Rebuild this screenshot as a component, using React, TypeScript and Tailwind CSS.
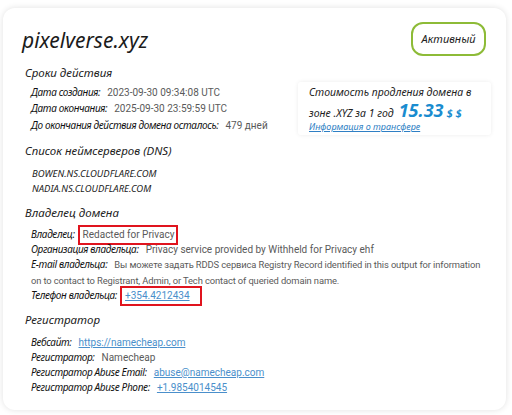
import React from "react";

const italic = { fontFamily: '"Noto Sans", "Open Sans", sans-serif' };
const plain = { fontFamily: "Roboto, sans-serif" };

function Label({ children }: { children: React.ReactNode }) {
  return (
    <span className="italic text-[10px] tracking-[-0.35px] text-[#111]" style={italic}>
      {children}
    </span>
  );
}

function Row({ label, children }: { label: string; children: React.ReactNode }) {
  return (
    <div className="flex items-center h-[15.2px] whitespace-nowrap">
      <Label>{label}</Label>
      <span className="ml-[7px] text-[10px] text-[#5a5a5a]" style={plain}>
        {children}
      </span>
    </div>
  );
}

function Heading({ children, className = "" }: { children: React.ReactNode; className?: string }) {
  return (
    <h2 className={"italic text-[11.5px] leading-[16px] text-[#222] " + className} style={italic}>
      {children}
    </h2>
  );
}

function Link({ children }: { children: React.ReactNode }) {
  return <a className="text-[#4a8fcb] underline underline-offset-1">{children}</a>;
}

export default function App() {
  return (
    <div className="w-[512px] h-[415px] bg-white pt-[8px] px-[3px]">
      <div className="w-[503px] h-[402px] rounded-[12px] bg-white shadow-[0_0_6px_rgba(0,0,0,0.12)] pt-[14px] pl-[19px] pr-[20px]">
        <div className="flex items-center justify-between h-[34px]">
          <h1 className="italic text-[21px] text-[#1b1b1b] leading-[28px] mt-[2px]" style={italic}>
            pixelverse.xyz
          </h1>
          <div
            className="w-[75px] h-[34px] rounded-[12px] border-2 border-[#8dbb37] flex items-center justify-center italic text-[11px] text-[#222]"
            style={italic}
          >
            Активный
          </div>
        </div>

        <div className="flex justify-between items-start">
          <div className="pl-[3px]">
            <Heading className="mt-[9px]">Сроки действия</Heading>
            <div className="mt-[3px] pl-[6px]">
              <div className="h-[16.5px] flex items-center"><Row label="Дата создания:">2023-09-30 09:34:08 UTC</Row></div>
              <div className="h-[16.5px] flex items-center"><Row label="Дата окончания:">2025-09-30 23:59:59 UTC</Row></div>
              <div className="h-[16.5px] flex items-center"><Row label="До окончания действия домена осталось:">479 дней</Row></div>
            </div>
          </div>
          <div className="mt-[26px] w-[193px] h-[53px] shadow-[0_0_4px_rgba(0,0,0,0.08)] rounded-[3px] pl-[11px] pt-[2px] mr-[-5px]">
            <div className="italic text-[10.5px] leading-[16px] text-[#222] whitespace-nowrap" style={italic}>
              Стоимость продления домена в
            </div>
            <div className="flex items-baseline italic text-[10.5px] leading-[20px] h-[20px] text-[#222] whitespace-nowrap" style={italic}>
              зоне .XYZ за 1 год
              <span className="ml-[5px] font-bold text-[18px] text-[#1a8ccf]" style={italic}>
                15.33
              </span>
              <span className="ml-[3px] font-bold italic text-[11px] text-[#1a8ccf]">$ $</span>
            </div>
            <div className="italic text-[9px] leading-[14px] text-[#2f7fc4] underline" style={italic}>
              Информация о трансфере
            </div>
          </div>
        </div>

        <div className="pl-[3px]">
          <Heading className="mt-[8px]">Список неймсерверов (DNS)</Heading>
          <div className="mt-[6.5px] pl-[7px] italic text-[9.5px] leading-[15px] text-[#222]" style={italic}>
            <div>BOWEN.NS.CLOUDFLARE.COM</div>
            <div>NADIA.NS.CLOUDFLARE.COM</div>
          </div>

          <Heading className="mt-[9px]">Владелец домена</Heading>
          <div className="mt-[6.5px] pl-[6px]">
            <div className="flex items-center h-[15.2px] whitespace-nowrap">
              <Label>Владелец:</Label>
              <span
                className="ml-[3px] border-2 border-[#e0141e] h-[20px] pl-[3px] pr-[2px] flex items-center text-[10px] text-[#5a5a5a]"
                style={plain}
              >
                Redacted for Privacy
              </span>
            </div>
            <Row label="Организация владельца:">Privacy service provided by Withheld for Privacy ehf</Row>
            <div className="text-[9.4px] tracking-[-0.12px] leading-[15.5px] text-[#5a5a5a] whitespace-nowrap" style={plain}>
              <Label>E-mail владельца:</Label>
              <span className="ml-[7px]">
                Вы можете задать RDDS сервиса Registry Record identified in this output for information
              </span>
              <br />
              <span>on to contact to Registrant, Admin, or Tech contact of queried domain name.</span>
            </div>
            <div className="flex items-center h-[15.2px] whitespace-nowrap">
              <Label>Телефон владельца:</Label>
              <span
                className="ml-[3px] border-2 border-[#e0141e] h-[20px] pl-[3px] pr-[10px] flex items-center text-[10px]"
                style={plain}
              >
                <Link>+354.4212434</Link>
              </span>
            </div>
          </div>

          <Heading className="mt-[8px]">Регистратор</Heading>
          <div className="mt-[7px] pl-[6px]">
            <Row label="Вебсайт:"><Link>https://namecheap.com</Link></Row>
            <Row label="Регистратор:">Namecheap</Row>
            <Row label="Регистратор Abuse Email:"><Link>abuse@namecheap.com</Link></Row>
            <Row label="Регистратор Abuse Phone:"><Link>+1.9854014545</Link></Row>
          </div>
        </div>
      </div>
    </div>
  );
}
